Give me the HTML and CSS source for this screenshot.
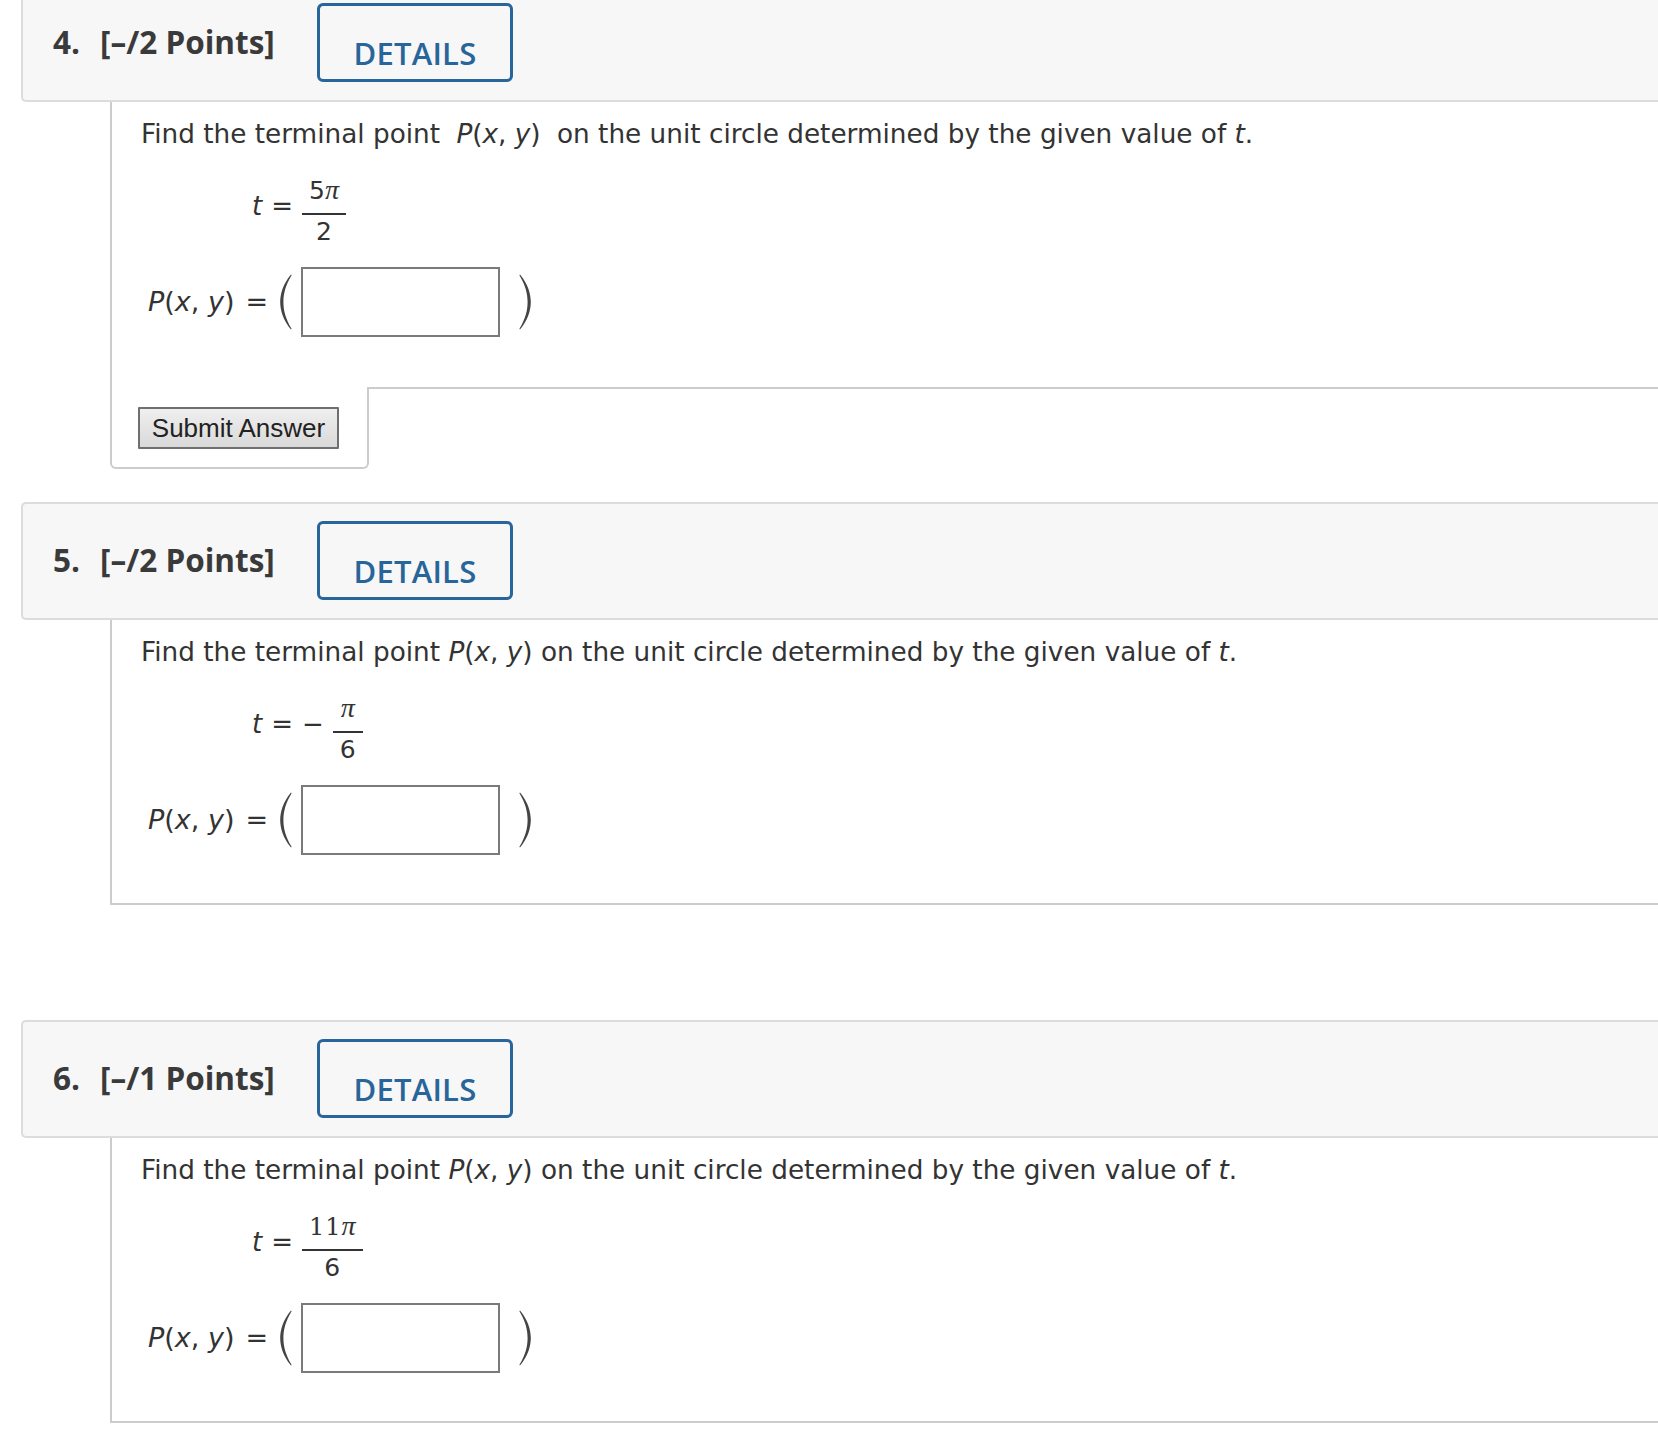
FILE: index.html
```html
<!DOCTYPE html>
<html lang="en">
<head>
<meta charset="utf-8">
<title>Questions</title>
<link rel="stylesheet" href="styles.css">
</head>
<body>
<div class="page">

  <section class="question first">
    <div class="q-header">
      <div class="q-title"><span class="q-num">4.</span><span class="q-pts">[–/2 Points]</span></div>
      <div class="details-btn">DETAILS</div>
    </div>
    <div class="q-content with-tab">
      <p class="prompt">Find the terminal point <span class="spaced"><i>P</i>(<i>x</i>, <i>y</i>)</span> on the unit circle determined by the given value of <i>t</i>.</p>
      <div class="t-row">
        <span class="t-label"><i>t</i><span class="op">=</span></span>
        <span class="frac"><span class="num">5<span class="pi">π</span></span><span class="bar"></span><span class="den">2</span></span>
      </div>
      <div class="p-row">
        <span class="p-label"><i>P</i>(<i>x</i>, <i>y</i>)<span class="op eq">=</span></span>
        <svg class="paren" viewBox="0 0 14 56"><path d="M13 0.5 C5 10 2.2 20 2.2 28 C2.2 36 5 46 13 55.5 L13.6 54.8 C7.5 45 5.4 36 5.4 28 C5.4 20 7.5 11 13.6 1.2 Z"/></svg>
        <input class="answer" type="text" aria-label="answer">
        <svg class="paren right" viewBox="0 0 14 56"><path d="M13 0.5 C5 10 2.2 20 2.2 28 C2.2 36 5 46 13 55.5 L13.6 54.8 C7.5 45 5.4 36 5.4 28 C5.4 20 7.5 11 13.6 1.2 Z"/></svg>
      </div>
    </div>
    <div class="after-row">
      <div class="tab"><button class="submit" type="button">Submit Answer</button></div>
      <div class="tab-fill"></div>
    </div>
  </section>

  <section class="question">
    <div class="q-header">
      <div class="q-title"><span class="q-num">5.</span><span class="q-pts">[–/2 Points]</span></div>
      <div class="details-btn">DETAILS</div>
    </div>
    <div class="q-content">
      <p class="prompt">Find the terminal point <i>P</i>(<i>x</i>, <i>y</i>) on the unit circle determined by the given value of <i>t</i>.</p>
      <div class="t-row">
        <span class="t-label"><i>t</i><span class="op">=</span><span class="op minus">−</span></span>
        <span class="frac"><span class="num"><span class="pi">π</span></span><span class="bar"></span><span class="den">6</span></span>
      </div>
      <div class="p-row">
        <span class="p-label"><i>P</i>(<i>x</i>, <i>y</i>)<span class="op eq">=</span></span>
        <svg class="paren" viewBox="0 0 14 56"><path d="M13 0.5 C5 10 2.2 20 2.2 28 C2.2 36 5 46 13 55.5 L13.6 54.8 C7.5 45 5.4 36 5.4 28 C5.4 20 7.5 11 13.6 1.2 Z"/></svg>
        <input class="answer" type="text" aria-label="answer">
        <svg class="paren right" viewBox="0 0 14 56"><path d="M13 0.5 C5 10 2.2 20 2.2 28 C2.2 36 5 46 13 55.5 L13.6 54.8 C7.5 45 5.4 36 5.4 28 C5.4 20 7.5 11 13.6 1.2 Z"/></svg>
      </div>
    </div>
    <div class="after-row"></div>
  </section>

  <section class="question">
    <div class="q-header">
      <div class="q-title"><span class="q-num">6.</span><span class="q-pts">[–/1 Points]</span></div>
      <div class="details-btn">DETAILS</div>
    </div>
    <div class="q-content">
      <p class="prompt">Find the terminal point <i>P</i>(<i>x</i>, <i>y</i>) on the unit circle determined by the given value of <i>t</i>.</p>
      <div class="t-row">
        <span class="t-label"><i>t</i><span class="op">=</span></span>
        <span class="frac"><span class="num"><span class="serif-num">11</span><span class="pi">π</span></span><span class="bar"></span><span class="den">6</span></span>
      </div>
      <div class="p-row">
        <span class="p-label"><i>P</i>(<i>x</i>, <i>y</i>)<span class="op eq">=</span></span>
        <svg class="paren" viewBox="0 0 14 56"><path d="M13 0.5 C5 10 2.2 20 2.2 28 C2.2 36 5 46 13 55.5 L13.6 54.8 C7.5 45 5.4 36 5.4 28 C5.4 20 7.5 11 13.6 1.2 Z"/></svg>
        <input class="answer" type="text" aria-label="answer">
        <svg class="paren right" viewBox="0 0 14 56"><path d="M13 0.5 C5 10 2.2 20 2.2 28 C2.2 36 5 46 13 55.5 L13.6 54.8 C7.5 45 5.4 36 5.4 28 C5.4 20 7.5 11 13.6 1.2 Z"/></svg>
      </div>
    </div>
    <div class="after-row"></div>
  </section>

</div>
</body>
</html>
```

FILE: styles.css
```css
html, body {
  margin: 0;
  padding: 0;
  background: #ffffff;
}

body {
  font-family: "Open Sans", "Noto Sans", sans-serif;
  color: #333333;
  overflow: hidden;
}

.page {
  padding-left: 21px;
}

.question {
  margin-bottom: 33px;
}

.question.first {
  margin-top: -16px;
}

/* header bar */
.q-header {
  display: flex;
  align-items: flex-start;
  box-sizing: border-box;
  height: 118px;
  padding-left: 30px;
  background: #f7f7f7;
  border: 2px solid #dcdcdc;
  border-right: none;
  border-radius: 5px 0 0 5px;
}

.q-title {
  flex: 0 0 264px;
  padding-top: 36px;
  font-size: 31.5px;
  line-height: 40px;
  font-weight: 700;
  color: #3a3a3a;
  white-space: nowrap;
}

.q-num {
  margin-right: 20px;
}

.details-btn {
  box-sizing: border-box;
  width: 196px;
  height: 79px;
  margin-top: 17px;
  padding-top: 27px;
  border: 3px solid #28659a;
  border-radius: 6px;
  font-size: 31px;
  line-height: 40px;
  font-weight: 600;
  color: #28659a;
  text-align: center;
  letter-spacing: 0.2px;
}

/* content */
.q-content {
  margin-left: 89px;
  padding: 14px 0 48px 29px;
  border-left: 2px solid #cccccc;
  border-bottom: 2px solid #cccccc;
  font-family: "DejaVu Sans", "Verdana", sans-serif;
}

.q-content.with-tab {
  border-bottom: none;
  padding-bottom: 50px;
}

.prompt {
  margin: 0;
  font-size: 26.3px;
  line-height: 36px;
  color: #333333;
  white-space: nowrap;
}

.prompt i,
.t-label i,
.p-label i {
  font-style: italic;
}

.spaced {
  margin: 0 8px;
}

.t-row {
  display: flex;
  align-items: flex-start;
  margin: 22px 0 0 111px;
}

.t-label {
  margin-top: 14px;
  font-size: 26px;
  line-height: 36px;
  white-space: nowrap;
}

.op {
  margin-left: 9px;
}

.t-label .op:last-child {
  margin-right: 9px;
}

.op.minus {
  margin-left: 9px;
}

.frac {
  display: inline-flex;
  flex-direction: column;
  align-items: stretch;
}

.num,
.den {
  display: block;
  text-align: center;
  font-size: 25px;
  line-height: 32px;
  padding: 0 7px;
}

.den {
  line-height: 30px;
  padding-bottom: 2px;
}

.bar {
  display: block;
  border-top: 2px solid #333333;
  margin: 6px 0 2px;
}

.pi {
  font-family: "Liberation Serif", "DejaVu Serif", serif;
  font-style: italic;
  font-size: 28px;
}

.serif-num {
  font-family: "DejaVu Serif", "Liberation Serif", serif;
  font-size: 24px;
  letter-spacing: 1px;
}

.p-row {
  display: flex;
  align-items: center;
  height: 70px;
  margin-top: 18px;
  padding-left: 7px;
}

.p-label {
  font-size: 27px;
  line-height: 36px;
  white-space: nowrap;
}

.op.eq {
  margin-left: 11px;
}

.paren {
  width: 14px;
  height: 56px;
  margin-left: 10px;
  fill: #444444;
}

.paren.right {
  margin-left: 19px;
  transform: scaleX(-1);
}

.answer {
  box-sizing: border-box;
  width: 199px;
  height: 70px;
  margin: 0 0 0 9px;
  padding: 0;
  border: 2px solid #7a7a7a;
  border-radius: 0;
  background: #ffffff;
  outline: none;
}

/* below-content row */
.after-row {
  display: flex;
  height: 82px;
  margin-left: 89px;
}

.tab {
  box-sizing: border-box;
  width: 259px;
  height: 82px;
  padding: 20px 0 0 26px;
  border: 2px solid #cccccc;
  border-top: none;
  border-radius: 0 0 6px 6px;
}

.tab-fill {
  flex: 1;
  border-top: 2px solid #cccccc;
}

.submit {
  box-sizing: border-box;
  width: 201px;
  height: 42px;
  margin: 0;
  padding: 0;
  border: 2px solid #6f6f6f;
  border-radius: 1px;
  background: linear-gradient(#efefef, #d9d9d9);
  font-family: "Liberation Sans", Arial, sans-serif;
  font-size: 26px;
  line-height: 38px;
  color: #222222;
}
```
